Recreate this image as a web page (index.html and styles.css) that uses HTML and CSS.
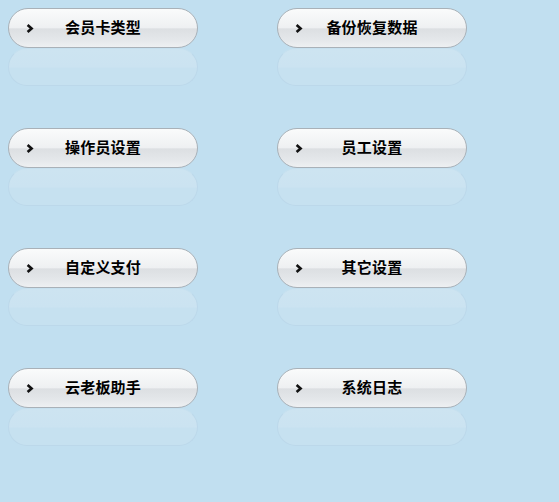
FILE: index.html
```html
<!DOCTYPE html>
<html lang="zh-CN">

<head>
  <meta charset="UTF-8">
  <title>系统设置</title>
  <link rel="stylesheet" href="styles.css">
</head>

<body>
  <div class="menu">
    <div class="item">
      <a class="btn" href="#"><svg class="arrow" viewBox="0 0 8 9"><path d="M1.6 1 L5.6 4.5 L1.6 8"/></svg><span>会员卡类型</span></a>
      <div class="mirror"></div>
    </div>
    <div class="item">
      <a class="btn" href="#"><svg class="arrow" viewBox="0 0 8 9"><path d="M1.6 1 L5.6 4.5 L1.6 8"/></svg><span>备份恢复数据</span></a>
      <div class="mirror"></div>
    </div>
    <div class="item">
      <a class="btn" href="#"><svg class="arrow" viewBox="0 0 8 9"><path d="M1.6 1 L5.6 4.5 L1.6 8"/></svg><span>操作员设置</span></a>
      <div class="mirror"></div>
    </div>
    <div class="item">
      <a class="btn" href="#"><svg class="arrow" viewBox="0 0 8 9"><path d="M1.6 1 L5.6 4.5 L1.6 8"/></svg><span>员工设置</span></a>
      <div class="mirror"></div>
    </div>
    <div class="item">
      <a class="btn" href="#"><svg class="arrow" viewBox="0 0 8 9"><path d="M1.6 1 L5.6 4.5 L1.6 8"/></svg><span>自定义支付</span></a>
      <div class="mirror"></div>
    </div>
    <div class="item">
      <a class="btn" href="#"><svg class="arrow" viewBox="0 0 8 9"><path d="M1.6 1 L5.6 4.5 L1.6 8"/></svg><span>其它设置</span></a>
      <div class="mirror"></div>
    </div>
    <div class="item">
      <a class="btn" href="#"><svg class="arrow" viewBox="0 0 8 9"><path d="M1.6 1 L5.6 4.5 L1.6 8"/></svg><span>云老板助手</span></a>
      <div class="mirror"></div>
    </div>
    <div class="item">
      <a class="btn" href="#"><svg class="arrow" viewBox="0 0 8 9"><path d="M1.6 1 L5.6 4.5 L1.6 8"/></svg><span>系统日志</span></a>
      <div class="mirror"></div>
    </div>
  </div>
</body>

</html>
```

FILE: styles.css
```css
body {
  margin: 0;
  padding: 8px;
  height: 502px;
  box-sizing: border-box;
  background-color: #c1dff0;
  font-family: "Noto Sans CJK SC", "Liberation Sans", sans-serif;
}

.menu {
  display: grid;
  grid-template-columns: 190px 190px;
  column-gap: 79px;
  row-gap: 42px;
}

.item {
  height: 78px;
}

.btn {
  position: relative;
  display: flex;
  align-items: center;
  justify-content: center;
  box-sizing: border-box;
  height: 40px;
  padding-bottom: 3px;
  border: 1px solid #a9b1b8;
  border-radius: 20px;
  background: linear-gradient(to bottom, #fafbfb 0%, #eef0f2 50%, #dcdfe2 52%, #e4e7ea 80%, #eef0f2 100%);
  color: #000;
  text-decoration: none;
  font-size: 15px;
  font-weight: bold;
  letter-spacing: 0.2px;
}

.arrow {
  position: absolute;
  left: 17px;
  top: 15px;
  width: 8px;
  height: 9px;
  fill: none;
  stroke: #111;
  stroke-width: 2.6;
}

.mirror {
  box-sizing: border-box;
  height: 38px;
  border: 1px solid #bcd8ea;
  border-top-color: #c6e0ef;
  border-radius: 19px;
  background: linear-gradient(to bottom, #cde4f1 0%, #cbe3f1 50%, #c6e1f0 53%, #c6e1f0 100%);
}
```
